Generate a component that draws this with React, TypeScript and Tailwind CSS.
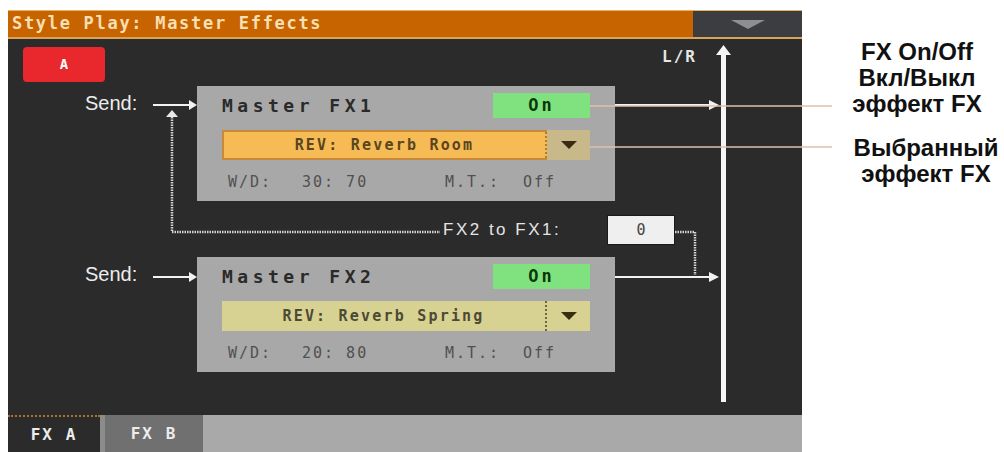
import React from 'react';

const mono = { fontFamily: '"DejaVu Sans Mono", "Liberation Mono", monospace' };
const sans = { fontFamily: '"Liberation Sans", Arial, sans-serif' };

type PanelProps = {
  name: string;
  effect: string;
  wd: string;
  selected?: boolean;
};

function FxPanel({ name, effect, wd, selected }: PanelProps) {
  return (
    <div className="w-[418px] h-[115px] bg-[#a8a8a8] pl-[25px] pt-[7px]" style={mono}>
      <div className="flex items-center h-[25px]">
        <div className="w-[271px] text-[18px] font-bold tracking-[4.5px] text-[#2a2a2a]">{name}</div>
        <div className="w-[97px] h-[25px] bg-[#7fe27f] flex items-center justify-center text-[17px] font-bold tracking-[3px] text-[#0a360a]">
          On
        </div>
      </div>
      <div
        className={
          selected
            ? 'mt-[12px] w-[368px] h-[30px] flex border-2 border-[#c88a38] bg-[#f6bb55]'
            : 'mt-[12px] w-[368px] h-[30px] flex bg-[#d8d292]'
        }
      >
        <div
          className={
            selected
              ? 'w-[323px] flex items-center justify-center text-[15px] font-bold tracking-[2.2px] text-[#5a4520] border-r-2 border-dotted border-[#b87a28]'
              : 'w-[325px] flex items-center justify-center text-[15px] font-bold tracking-[2.2px] text-[#4c4a34] border-r-2 border-dotted border-[#6a6848]'
          }
        >
          {effect}
        </div>
        <div className={selected ? 'flex-1 flex items-center justify-center bg-[#c9b98a] -my-[2px] -mr-[2px]' : 'flex-1 flex items-center justify-center'}>
          <svg width="16" height="8" viewBox="0 0 16 8">
            <polygon points="0,0 16,0 8,8" fill="#3a2c12" />
          </svg>
        </div>
      </div>
      <div className="mt-[12px] grid grid-cols-[74px_143px_78px_auto] pl-[6px] text-[15px] leading-[20px] tracking-[2px] text-[#505050]">
        <span>W/D:</span>
        <span>{wd}</span>
        <span>M.T.:</span>
        <span>Off</span>
      </div>
    </div>
  );
}

function SendRow({ children }: { children: React.ReactNode }) {
  return (
    <div className="flex pl-[77px]">
      <div className="w-[112px] pt-[5px] text-[20px] leading-[24px] text-[#ececec]" style={sans}>
        Send:
      </div>
      {children}
    </div>
  );
}

function Wires() {
  const dot = { stroke: '#d4d4d4', strokeWidth: 2.5, strokeDasharray: '1.5 1', fill: 'none' };
  return (
    <svg className="absolute inset-0 pointer-events-none" width="794" height="378">
      {/* send arrows */}
      <line x1="145" y1="66" x2="184" y2="66" stroke="#f2f2f2" strokeWidth="2" />
      <polygon points="181,61 189,66 181,71" fill="#f2f2f2" />
      <line x1="145" y1="238" x2="184" y2="238" stroke="#f2f2f2" strokeWidth="2" />
      <polygon points="181,233 189,238 181,243" fill="#f2f2f2" />
      {/* FX2 to FX1 feedback */}
      <polygon points="158,78 164,71 170,78" fill="#e8e8e8" />
      <polyline points="164,78 164,193 432,193" style={dot} />
      <polyline points="667,193 687,193 687,236" style={dot} />
      {/* outputs */}
      <line x1="607" y1="66" x2="704" y2="66" stroke="#f2f2f2" strokeWidth="2" />
      <polygon points="701,61 711,66 701,71" fill="#f2f2f2" />
      <line x1="607" y1="238" x2="704" y2="238" stroke="#f2f2f2" strokeWidth="2" />
      <polygon points="701,233 711,238 701,243" fill="#f2f2f2" />
      {/* L/R bus */}
      <rect x="713" y="14" width="5" height="349" fill="#f6f6f6" />
      <polygon points="708,16 715.5,6 723,16" fill="#f6f6f6" />
    </svg>
  );
}

export default function App() {
  return (
    <div className="relative w-[1004px] h-[452px] bg-white flex overflow-hidden">
      <div className="w-[802px] shrink-0 pt-[10px] pl-[8px] flex flex-col">
        {/* title bar */}
        <div className="h-[29px] flex border-t border-b-2 border-t-[#e8b060] border-b-[#d9a35a]">
          <div className="flex-1 bg-[#c86400] flex items-center pl-[4px] text-[17px] font-bold tracking-[1.7px] text-[#f7dfb2]" style={mono}>
            Style Play: Master Effects
          </div>
          <div className="w-[109px] bg-[#3b3d40] flex items-center justify-center">
            <svg width="34" height="9" viewBox="0 0 34 9">
              <polygon points="0,0 34,0 17,9" fill="#8d8f92" />
            </svg>
          </div>
        </div>

        {/* body */}
        <div className="relative h-[376px] bg-[#2b2b2b]">
          <Wires />
          <div className="relative flex flex-col">
            <div className="mt-[8px] ml-[15px] w-[82px] h-[35px] rounded-[4px] bg-[#e8282c] flex items-center justify-center text-[14px] font-bold text-white" style={mono}>
              A
            </div>
            <div className="mt-[4px]">
              <SendRow>
                <FxPanel name="Master FX1" effect="REV: Reverb Room" wd="30: 70" selected />
              </SendRow>
            </div>
            <div className="mt-[14px] flex items-center h-[30px]">
              <div className="ml-[435px] w-[164px] text-[17px] tracking-[2.5px] text-[#e4e4e4]" style={sans}>
                FX2 to FX1:
              </div>
              <div className="w-[68px] h-[30px] bg-[#efefef] border border-[#1a1a1a] flex items-center justify-center text-[15px] text-[#444]" style={mono}>
                0
              </div>
            </div>
            <div className="mt-[12px]">
              <SendRow>
                <FxPanel name="Master FX2" effect="REV: Reverb Spring" wd="20: 80" />
              </SendRow>
            </div>
          </div>
          <div className="absolute left-[654px] top-[6px] text-[16px] font-bold tracking-[2px] text-[#e6e6e6]" style={mono}>
            L/R
          </div>
        </div>

        {/* tabs */}
        <div className="h-[37px] flex bg-[#a9a9a9] text-[16px] font-bold tracking-[2px] text-[#ececec]" style={mono}>
          <div className="w-[92px] bg-[#2b2b2b] border-t-2 border-dotted border-[#a7732e] flex items-center justify-center">
            FX A
          </div>
          <div className="w-[5px] bg-[#8c8c8c]" />
          <div className="w-[98px] bg-[#707070] flex items-center justify-center">FX B</div>
        </div>
      </div>

      {/* annotations */}
      <div className="flex-1 min-w-0 flex flex-col pt-[39px] pl-[30px] text-[24px] leading-[26px] font-bold text-[#111] whitespace-nowrap" style={sans}>
        <div className="w-[170px] text-center">
          <div>FX On/Off</div>
          <div>Вкл/Выкл</div>
          <div>эффект FX</div>
        </div>
        <div className="w-[164px] ml-[12px] text-center mt-[18px]">
          <div>Выбранный</div>
          <div>эффект FX</div>
        </div>
      </div>

      <svg className="absolute inset-0 pointer-events-none" width="1004" height="452">
        <line x1="590" y1="106" x2="832" y2="106" stroke="#e0c0a6" strokeWidth="1.5" />
        <line x1="590" y1="147" x2="832" y2="147" stroke="#e0c0a6" strokeWidth="1.5" />
      </svg>
    </div>
  );
}
